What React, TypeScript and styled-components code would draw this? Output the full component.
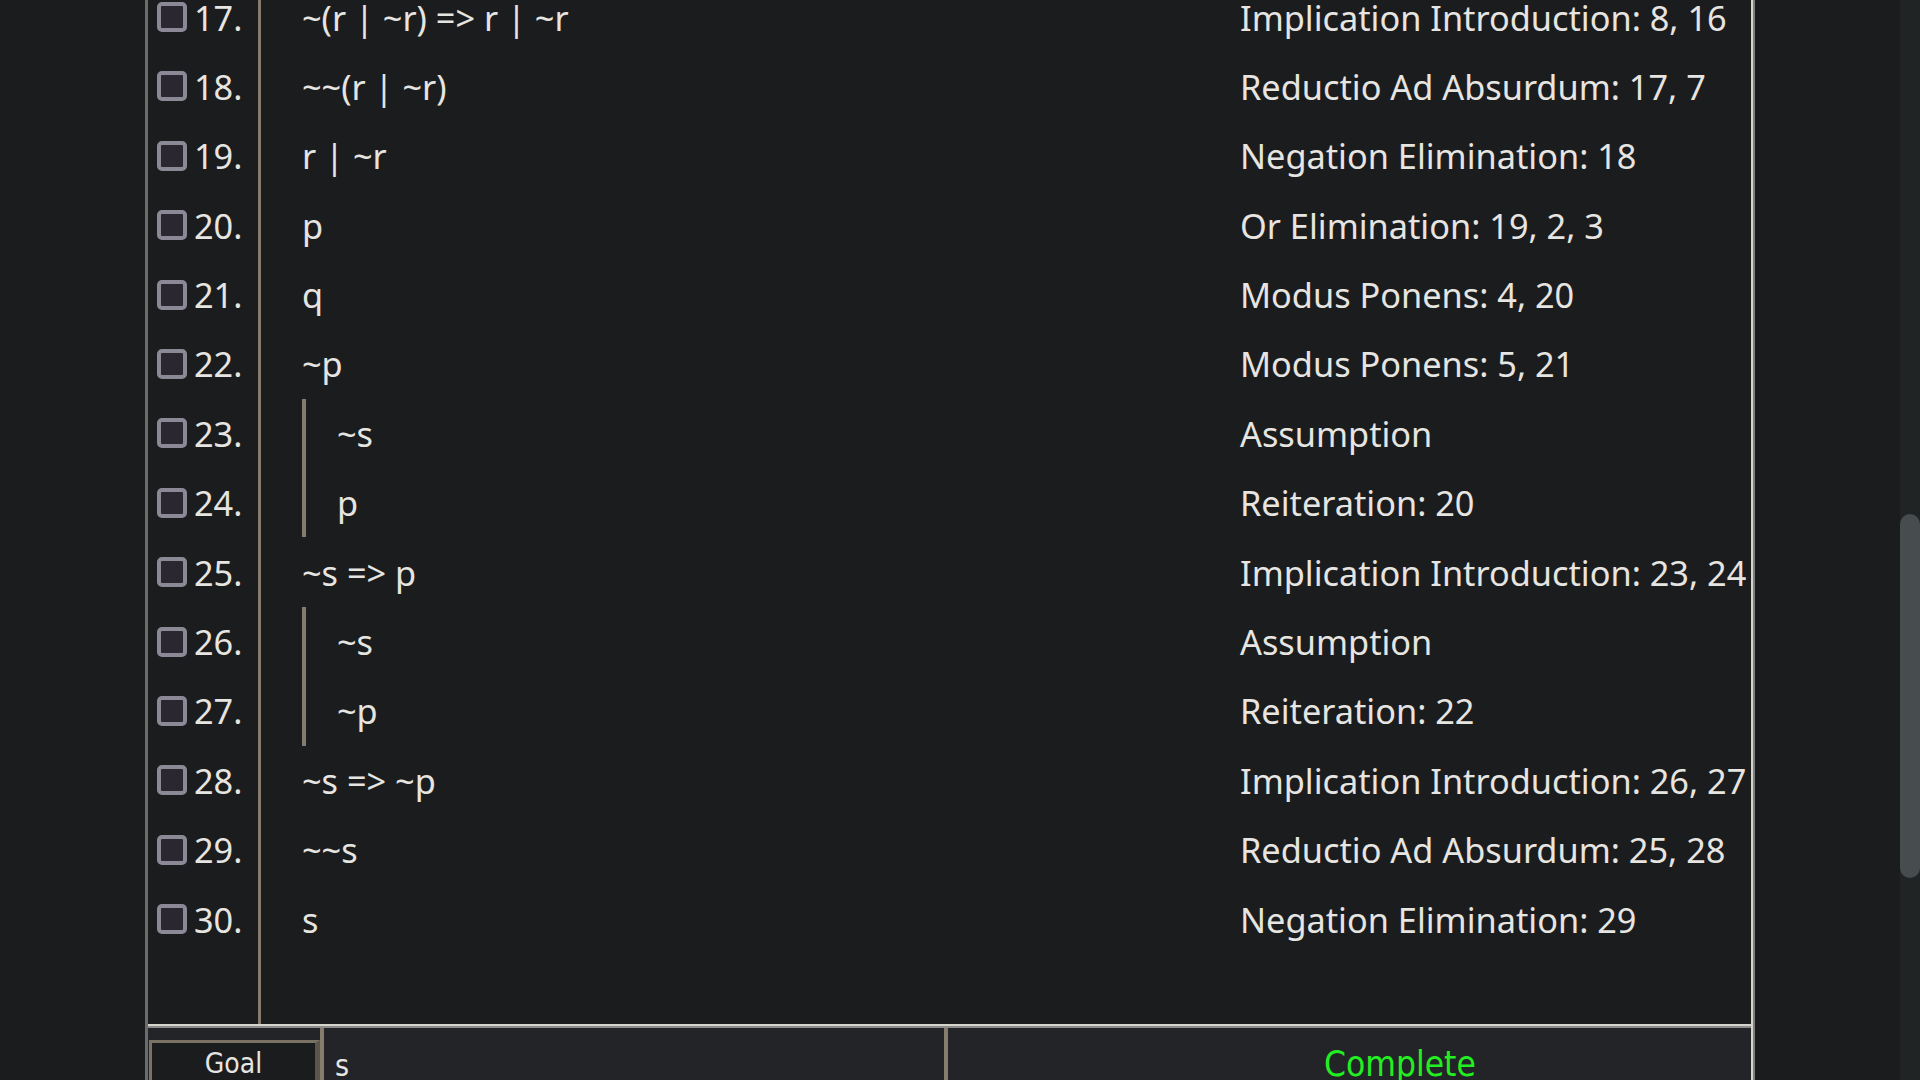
import React from "react";
import styled, { createGlobalStyle } from "styled-components";

const GlobalStyle = createGlobalStyle`
  html, body {
    margin: 0;
    padding: 0;
    background: #1b1c1e;
    overflow: hidden;
  }
  * { box-sizing: border-box; }
`;

type Line = { n: number; formula: string; reason: string; depth: number };

const lines: Line[] = [
  { n: 17, formula: "~(r | ~r) => r | ~r", reason: "Implication Introduction: 8, 16", depth: 0 },
  { n: 18, formula: "~~(r | ~r)", reason: "Reductio Ad Absurdum: 17, 7", depth: 0 },
  { n: 19, formula: "r | ~r", reason: "Negation Elimination: 18", depth: 0 },
  { n: 20, formula: "p", reason: "Or Elimination: 19, 2, 3", depth: 0 },
  { n: 21, formula: "q", reason: "Modus Ponens: 4, 20", depth: 0 },
  { n: 22, formula: "~p", reason: "Modus Ponens: 5, 21", depth: 0 },
  { n: 23, formula: "~s", reason: "Assumption", depth: 1 },
  { n: 24, formula: "p", reason: "Reiteration: 20", depth: 1 },
  { n: 25, formula: "~s => p", reason: "Implication Introduction: 23, 24", depth: 0 },
  { n: 26, formula: "~s", reason: "Assumption", depth: 1 },
  { n: 27, formula: "~p", reason: "Reiteration: 22", depth: 1 },
  { n: 28, formula: "~s => ~p", reason: "Implication Introduction: 26, 27", depth: 0 },
  { n: 29, formula: "~~s", reason: "Reductio Ad Absurdum: 25, 28", depth: 0 },
  { n: 30, formula: "s", reason: "Negation Elimination: 29", depth: 0 },
];

const Screen = styled.div`
  width: 1920px;
  height: 1080px;
  display: flex;
  background: #1b1c1e;
  overflow: hidden;
`;

const Panel = styled.div`
  margin-left: 145px;
  width: 1608px;
  height: 1080px;
  display: flex;
  flex-direction: column;
  border-left: 3px solid #6a6b6b;
  border-right: 2px solid #d6d4cc;
  box-shadow: 2px 0 0 #7d8080;
  overflow: hidden;
`;

const ProofArea = styled.div`
  height: 1024px;
  flex: none;
  overflow: hidden;
  display: flex;
  flex-direction: column;
  font-family: "Noto Sans", "Open Sans", sans-serif;
  font-size: 34.3px;
  color: #e7e5e1;
`;

const ProofList = styled.div`
  margin-top: -17.7px;
  flex: 1;
  display: flex;
  flex-direction: column;
`;

const Row = styled.div`
  height: 69.4px;
  flex: none;
  display: flex;
  align-items: stretch;
`;

const Gutter = styled.div`
  width: 113px;
  flex: none;
  display: flex;
  align-items: center;
  gap: 7px;
  padding-left: 9px;
  border-right: 3px solid #857c6e;
`;

const Filler = styled.div`
  flex: 1;
  display: flex;
`;

const Checkbox = styled.span`
  width: 30px;
  height: 30px;
  flex: none;
  border: 4px solid #8c8996;
  border-radius: 5px;
  background: #2a2731;
`;

const LineNo = styled.span`
  white-space: nowrap;
`;

const Formula = styled.div`
  flex: 1;
  display: flex;
  align-items: stretch;
  padding-left: 41px;
  white-space: nowrap;
`;

const SubproofBar = styled.span`
  width: 4px;
  flex: none;
  background: #857c6e;
  margin-right: 31px;
`;

const FormulaText = styled.span`
  display: flex;
  align-items: center;
`;

const Reason = styled.div`
  width: 511px;
  flex: none;
  display: flex;
  align-items: center;
  white-space: nowrap;
`;

const BottomRule = styled.div`
  height: 4px;
  flex: none;
  border-top: 2px solid #d6d4cc;
  background: #8c8c8c;
`;

const StatusBar = styled.div`
  flex: 1;
  min-height: 0;
  display: flex;
  background: #232427;
  font-family: "DejaVu Sans Condensed", "DejaVu Sans", sans-serif;
  font-stretch: condensed;
  color: #e7e5e1;
`;

const GoalCell = styled.div`
  width: 176px;
  flex: none;
  padding: 12px 0 0 1px;
  border-right: 4px solid #857c6e;
`;

const GoalButton = styled.div`
  width: 171px;
  height: 60px;
  border-top: 3px solid #7a7264;
  border-left: 3px solid #7a7264;
  border-right: 5px solid #5b554b;
  border-bottom: 5px solid #5b554b;
  background: #1b1c1e;
  font-size: 28px;
  text-align: center;
  line-height: 1;
  padding-top: 7px;
`;

const GoalField = styled.div`
  width: 624px;
  flex: none;
  padding: 20px 0 0 11px;
  font-size: 30px;
  border-right: 4px solid #857c6e;
`;

const StatusCell = styled.div`
  flex: 1;
  padding: 16px 0 0 376px;
  font-size: 35px;
  color: #22ee22;
`;

const ScrollTrack = styled.div`
  margin-left: auto;
  width: 20px;
  height: 1080px;
  background: #212425;
  padding-top: 514px;
`;

const ScrollThumb = styled.div`
  width: 20px;
  height: 364px;
  border-radius: 10px;
  background: #474c4e;
`;

export default function App() {
  return (
    <>
      <GlobalStyle />
      <Screen>
        <Panel>
          <ProofArea>
            <ProofList>
              {lines.map((l) => (
                <Row key={l.n}>
                  <Gutter>
                    <Checkbox />
                    <LineNo>{l.n}.</LineNo>
                  </Gutter>
                  <Formula>
                    {Array.from({ length: l.depth }).map((_, i) => (
                      <SubproofBar key={i} />
                    ))}
                    <FormulaText>{l.formula}</FormulaText>
                  </Formula>
                  <Reason>{l.reason}</Reason>
                </Row>
              ))}
              <Filler>
                <Gutter />
              </Filler>
            </ProofList>
          </ProofArea>
          <BottomRule />
          <StatusBar>
            <GoalCell>
              <GoalButton>Goal</GoalButton>
            </GoalCell>
            <GoalField>s</GoalField>
            <StatusCell>Complete</StatusCell>
          </StatusBar>
        </Panel>
        <ScrollTrack>
          <ScrollThumb />
        </ScrollTrack>
      </Screen>
    </>
  );
}
